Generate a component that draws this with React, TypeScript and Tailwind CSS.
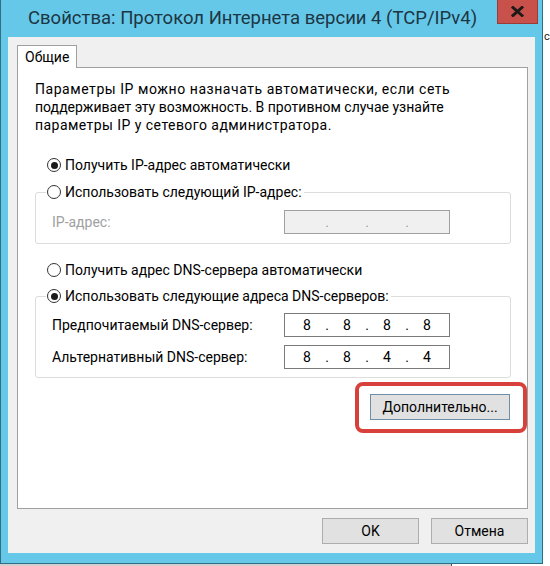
const Radio = ({ checked }: { checked?: boolean }) => (
    <span className="flex h-[14px] w-[14px] shrink-0 items-center justify-center rounded-full border border-[#333333] bg-white">
        {checked && <span className="h-[7px] w-[7px] rounded-full bg-[#1a1a1a]" />}
    </span>
);

const RadioRow = ({ label, checked }: { label: string; checked?: boolean }) => (
    <span className="flex h-[20px] items-center gap-[4px] whitespace-nowrap">
        <Radio checked={checked} />
        <span>{label}</span>
    </span>
);

const IpBox = ({ value, disabled }: { value: string[]; disabled?: boolean }) => (
    <div
        className={
            disabled
                ? 'flex h-[24px] w-[166px] items-center border border-[#a0a0a0] bg-[#f0f0f0] pl-[5px] text-[#a0a0a0]'
                : 'flex h-[24px] w-[166px] items-center border border-[#7a7a7a] bg-white pl-[5px] text-black'
        }
    >
        {value.map((v, i) => (
            <span key={i} className="flex items-center">
                <span className="w-[34px] text-center">{v}</span>
                {i < 3 && <span className="w-[6px] text-center">.</span>}
            </span>
        ))}
    </div>
);

const Button = ({ label, className }: { label: string; className: string }) => (
    <button className={`flex h-[26px] items-center justify-center border bg-[#e1e1e1] text-black ${className}`}>
        {label}
    </button>
);

export default function App() {
    return (
        <div className="flex h-[566px] w-[550px] flex-col overflow-hidden bg-white font-['Roboto',sans-serif] text-[14px] text-black">
            <div className="flex h-[564px]">
                {/* window frame */}
                <div className="flex w-[543px] flex-col border-x border-b border-[#2f6f86] bg-[#66c8e8]">
                    <div className="flex h-[37px] items-start">
                        <div className="pl-[27px] pt-[5px] text-[18.5px] whitespace-nowrap text-[#1c3644]">
                            Свойства: Протокол Интернета версии 4 (TCP/IPv4)
                        </div>
                        <div className="ml-auto mr-[4px] flex h-[24px] w-[41px] items-center justify-center border border-t-0 border-[#9a3b35] bg-[#c8524b]">
                            <svg width="13" height="11" viewBox="0 0 13 11">
                                <path d="M2 1.5 L11 9.5 M11 1.5 L2 9.5" stroke="#1f1a1a" strokeWidth="3" strokeLinecap="square" />
                            </svg>
                        </div>
                    </div>
                    {/* client area */}
                    <div className="mx-[7px] mb-[10px] flex h-[516px] flex-col bg-[#f0f0f0] pl-[9px] pr-[7px] pt-[8px]">
                        <div className="relative z-10 -mb-[1px] flex h-[23px] w-[60px] items-center border border-b-0 border-[#a0a0a0] bg-white pl-[7px]">
                            Общие
                        </div>
                        <div className="flex h-[442px] flex-col border border-[#a0a0a0] bg-white pl-[17px] pr-[16px] pt-[12px]">
                            <div className="leading-[18px] whitespace-nowrap">
                                <div className="tracking-[0.55px]">Параметры IP можно назначать автоматически, если сеть</div>
                                <div>поддерживает эту возможность. В противном случае узнайте</div>
                                <div className="tracking-[0.45px]">параметры IP у сетевого администратора.</div>
                            </div>

                            <div className="ml-[12px] mt-[21px]">
                                <RadioRow label="Получить IP-адрес автоматически" checked />
                            </div>

                            <fieldset className="mt-[7px] rounded-[3px] border border-[#dcdcdc] pb-[9px] pl-[16px] pr-[60px] pt-[8px]">
                                <legend className="-ml-[6px] pl-[1px] pr-[2px]">
                                    <RadioRow label="Использовать следующий IP-адрес:" />
                                </legend>
                                <div className="flex items-center justify-between">
                                    <span className="text-[#a0a0a0]">IP-адрес:</span>
                                    <IpBox value={['', '', '', '']} disabled />
                                </div>
                            </fieldset>

                            <div className="ml-[12px] mt-[16px]">
                                <RadioRow label="Получить адрес DNS-сервера автоматически" />
                            </div>

                            <fieldset className="mt-[6px] rounded-[3px] border border-[#dcdcdc] pb-[8px] pl-[16px] pr-[60px] pt-[7px]">
                                <legend className="-ml-[6px] pl-[1px] pr-[2px]">
                                    <RadioRow label="Использовать следующие адреса DNS-серверов:" checked />
                                </legend>
                                <div className="flex flex-col gap-[8px]">
                                    <div className="flex items-center justify-between">
                                        <span>Предпочитаемый DNS-сервер:</span>
                                        <IpBox value={['8', '8', '8', '8']} />
                                    </div>
                                    <div className="flex items-center justify-between">
                                        <span>Альтернативный DNS-сервер:</span>
                                        <IpBox value={['8', '8', '4', '4']} />
                                    </div>
                                </div>
                            </fieldset>

                            <div className="mr-[1px] mt-[16px] flex justify-end">
                                <div className="relative">
                                    <Button label="Дополнительно..." className="h-[25px] w-[140px] border-[#6f8fa8]" />
                                    {/* red highlight */}
                                    <div className="absolute -bottom-[13px] -left-[15px] -right-[17px] -top-[12px] rounded-[8px] border-4 border-[#d8403b]" />
                                </div>
                            </div>
                        </div>
                        <div className="mt-[9px] flex justify-end gap-[12px]">
                            <Button label="OK" className="w-[97px] border-[#adadad]" />
                            <Button label="Отмена" className="w-[97px] border-[#adadad]" />
                        </div>
                    </div>
                </div>
                <div className="flex-1 bg-white pl-[1px] pt-[30px] text-[11px] leading-[14px] text-[#222]">с</div>
            </div>
            <div className="h-[2px] w-[452px] border-r border-[#555] bg-[#d0d0d0]" />
        </div>
    );
}
